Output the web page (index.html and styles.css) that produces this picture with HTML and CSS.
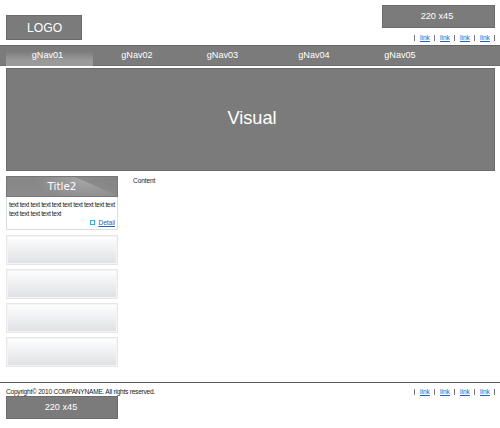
FILE: index.html
```html
<!DOCTYPE html>
<html lang="en">
<head>
<meta charset="utf-8">
<title>COMPANYNAME</title>
<link rel="stylesheet" href="styles.css">
</head>
<body>
<header class="header">
  <div class="block logo">LOGO</div>
  <div class="header-side">
    <div class="block banner">220 x45</div>
    <ul class="links"><li><a href="#">link</a></li><li><a href="#">link</a></li><li><a href="#">link</a></li><li><a href="#">link</a></li></ul>
  </div>
</header>
<nav class="gnav">
  <a class="active">gNav01</a><a>gNav02</a><a>gNav03</a><a>gNav04</a><a>gNav05</a>
</nav>
<div class="block visual">Visual</div>
<div class="main">
  <aside class="side">
    <section class="card">
      <h2><span>Title2</span></h2>
      <p>text text text text text text text text text text<br>text text text text text</p>
      <div class="detail"><i></i><a href="#">Detail</a></div>
    </section>
    <div class="button"></div>
    <div class="button"></div>
    <div class="button"></div>
    <div class="button"></div>
  </aside>
  <main class="content">Content</main>
</div>
<footer class="footer">
  <div class="footer-left">
    <p class="copyright">Copyright© 2010 COMPANYNAME. All rights reserved.</p>
    <div class="block banner footer-banner">220 x45</div>
  </div>
  <ul class="links"><li><a href="#">link</a></li><li><a href="#">link</a></li><li><a href="#">link</a></li><li><a href="#">link</a></li></ul>
</footer>
</body>
</html>
```
FILE: styles.css
```css
* { box-sizing: border-box; }
body {
  margin: 0;
  background: #fff;
  color: #222;
  font: 6.6px/9px "Liberation Sans", Arial, sans-serif;
}
h2, p, ul { margin: 0; padding: 0; }
.block {
  display: flex;
  align-items: center;
  justify-content: center;
  background: #7b7b7b;
  border: 1px solid #6b6b6b;
  color: #fff;
}
.header {
  display: flex;
  justify-content: space-between;
  height: 45px;
  padding: 5px 5px 0 6px;
}
.logo { width: 76px; height: 25px; margin-top: 10px; padding: 1px 3px 0 4px; font-size: 12.2px; }
.banner { width: 113px; height: 23px; font-size: 9.2px; padding-right: 3px; }
.links {
  display: flex;
  align-items: flex-start;
  justify-content: flex-end;
  list-style: none;
}
.header-side .links { margin-top: 5px; }
.links li {
  display: flex;
  align-items: center;
  width: 20px;
  padding-left: 6px;
  background: linear-gradient(#777, #777) 0 2px / 1px 6px no-repeat;
}
.links li:last-child { width: 21px; background: linear-gradient(#777, #777) 0 2px / 1px 6px no-repeat, linear-gradient(#777, #777) 100% 2px / 1px 6px no-repeat; }
a[href] { color: #1d62c4; text-decoration: underline; }
.gnav {
  display: flex;
  height: 21px;
  padding: 5px 0 0 6px;
  background: #7b7b7b;
  border-top: 1px solid #666;
  border-bottom: 1px solid #6c6c6c;
}
.gnav a {
  width: 88px;
  padding-right: 5px;
  color: #fff;
  font-size: 9.1px;
  line-height: 8px;
  text-align: center;
}
.gnav a:nth-child(2) { padding-right: 2px; }
.gnav a:nth-child(3) { padding-right: 7px; }
.gnav a:nth-child(4) { padding-right: 0; }
.gnav a:nth-child(5) { padding-right: 4px; }
.gnav .active { width: 87px; margin-right: 1px; padding-right: 4px; height: 15px; background: linear-gradient(#7b7b7b, #999 60%, #9c9c9c); }
.visual { height: 103px; margin: 2px 5px 0 6px; padding: 0 0 3px 3px; font-size: 18.2px; }
.main { display: flex; height: 211px; padding: 5px 0 0 6px; gap: 15px; }
.side { display: flex; flex-direction: column; gap: 4px; width: 112px; }
.card { height: 54px; margin-bottom: 1px; border: 1px solid #ddd; border-top: 0; }
.card h2 {
  height: 21px;
  margin: 0 -1px;
  border: 1px solid #777;
  background:
    linear-gradient(to bottom left, #838383, #8a8a8a 48%, transparent 51%) 100% 0 / 42px 19px no-repeat,
    radial-gradient(ellipse 55px 20px at 82px 3px, #a8a8a8, transparent),
    linear-gradient(#868686, #8b8b8b);
  color: #fff;
  font: 10.4px/19px "DejaVu Sans", sans-serif;
  text-align: center;
}
.card p { margin: 3px 0 0 2px; white-space: nowrap; letter-spacing: -.35px; }
.detail { display: flex; align-items: center; justify-content: flex-end; gap: 3px; padding-right: 2px; letter-spacing: -.05px; }
.detail i { width: 5px; height: 5px; border: 1px solid #2daee6; }
.button {
  height: 30px;
  padding: 1px;
  border: 1px solid #e6e6e6;
  background: linear-gradient(#fdfefe, #dfe1e4) content-box, #f5f5f5;
}
.content { letter-spacing: -.12px; }
.footer { display: flex; align-items: flex-start; justify-content: space-between; padding: 4px 5px 0 6px; border-top: 1px solid #5a5a5a; }
.copyright { height: 9px; white-space: nowrap; letter-spacing: -.25px; }
.footer-banner { width: 112px; padding-right: 2px; }
```
